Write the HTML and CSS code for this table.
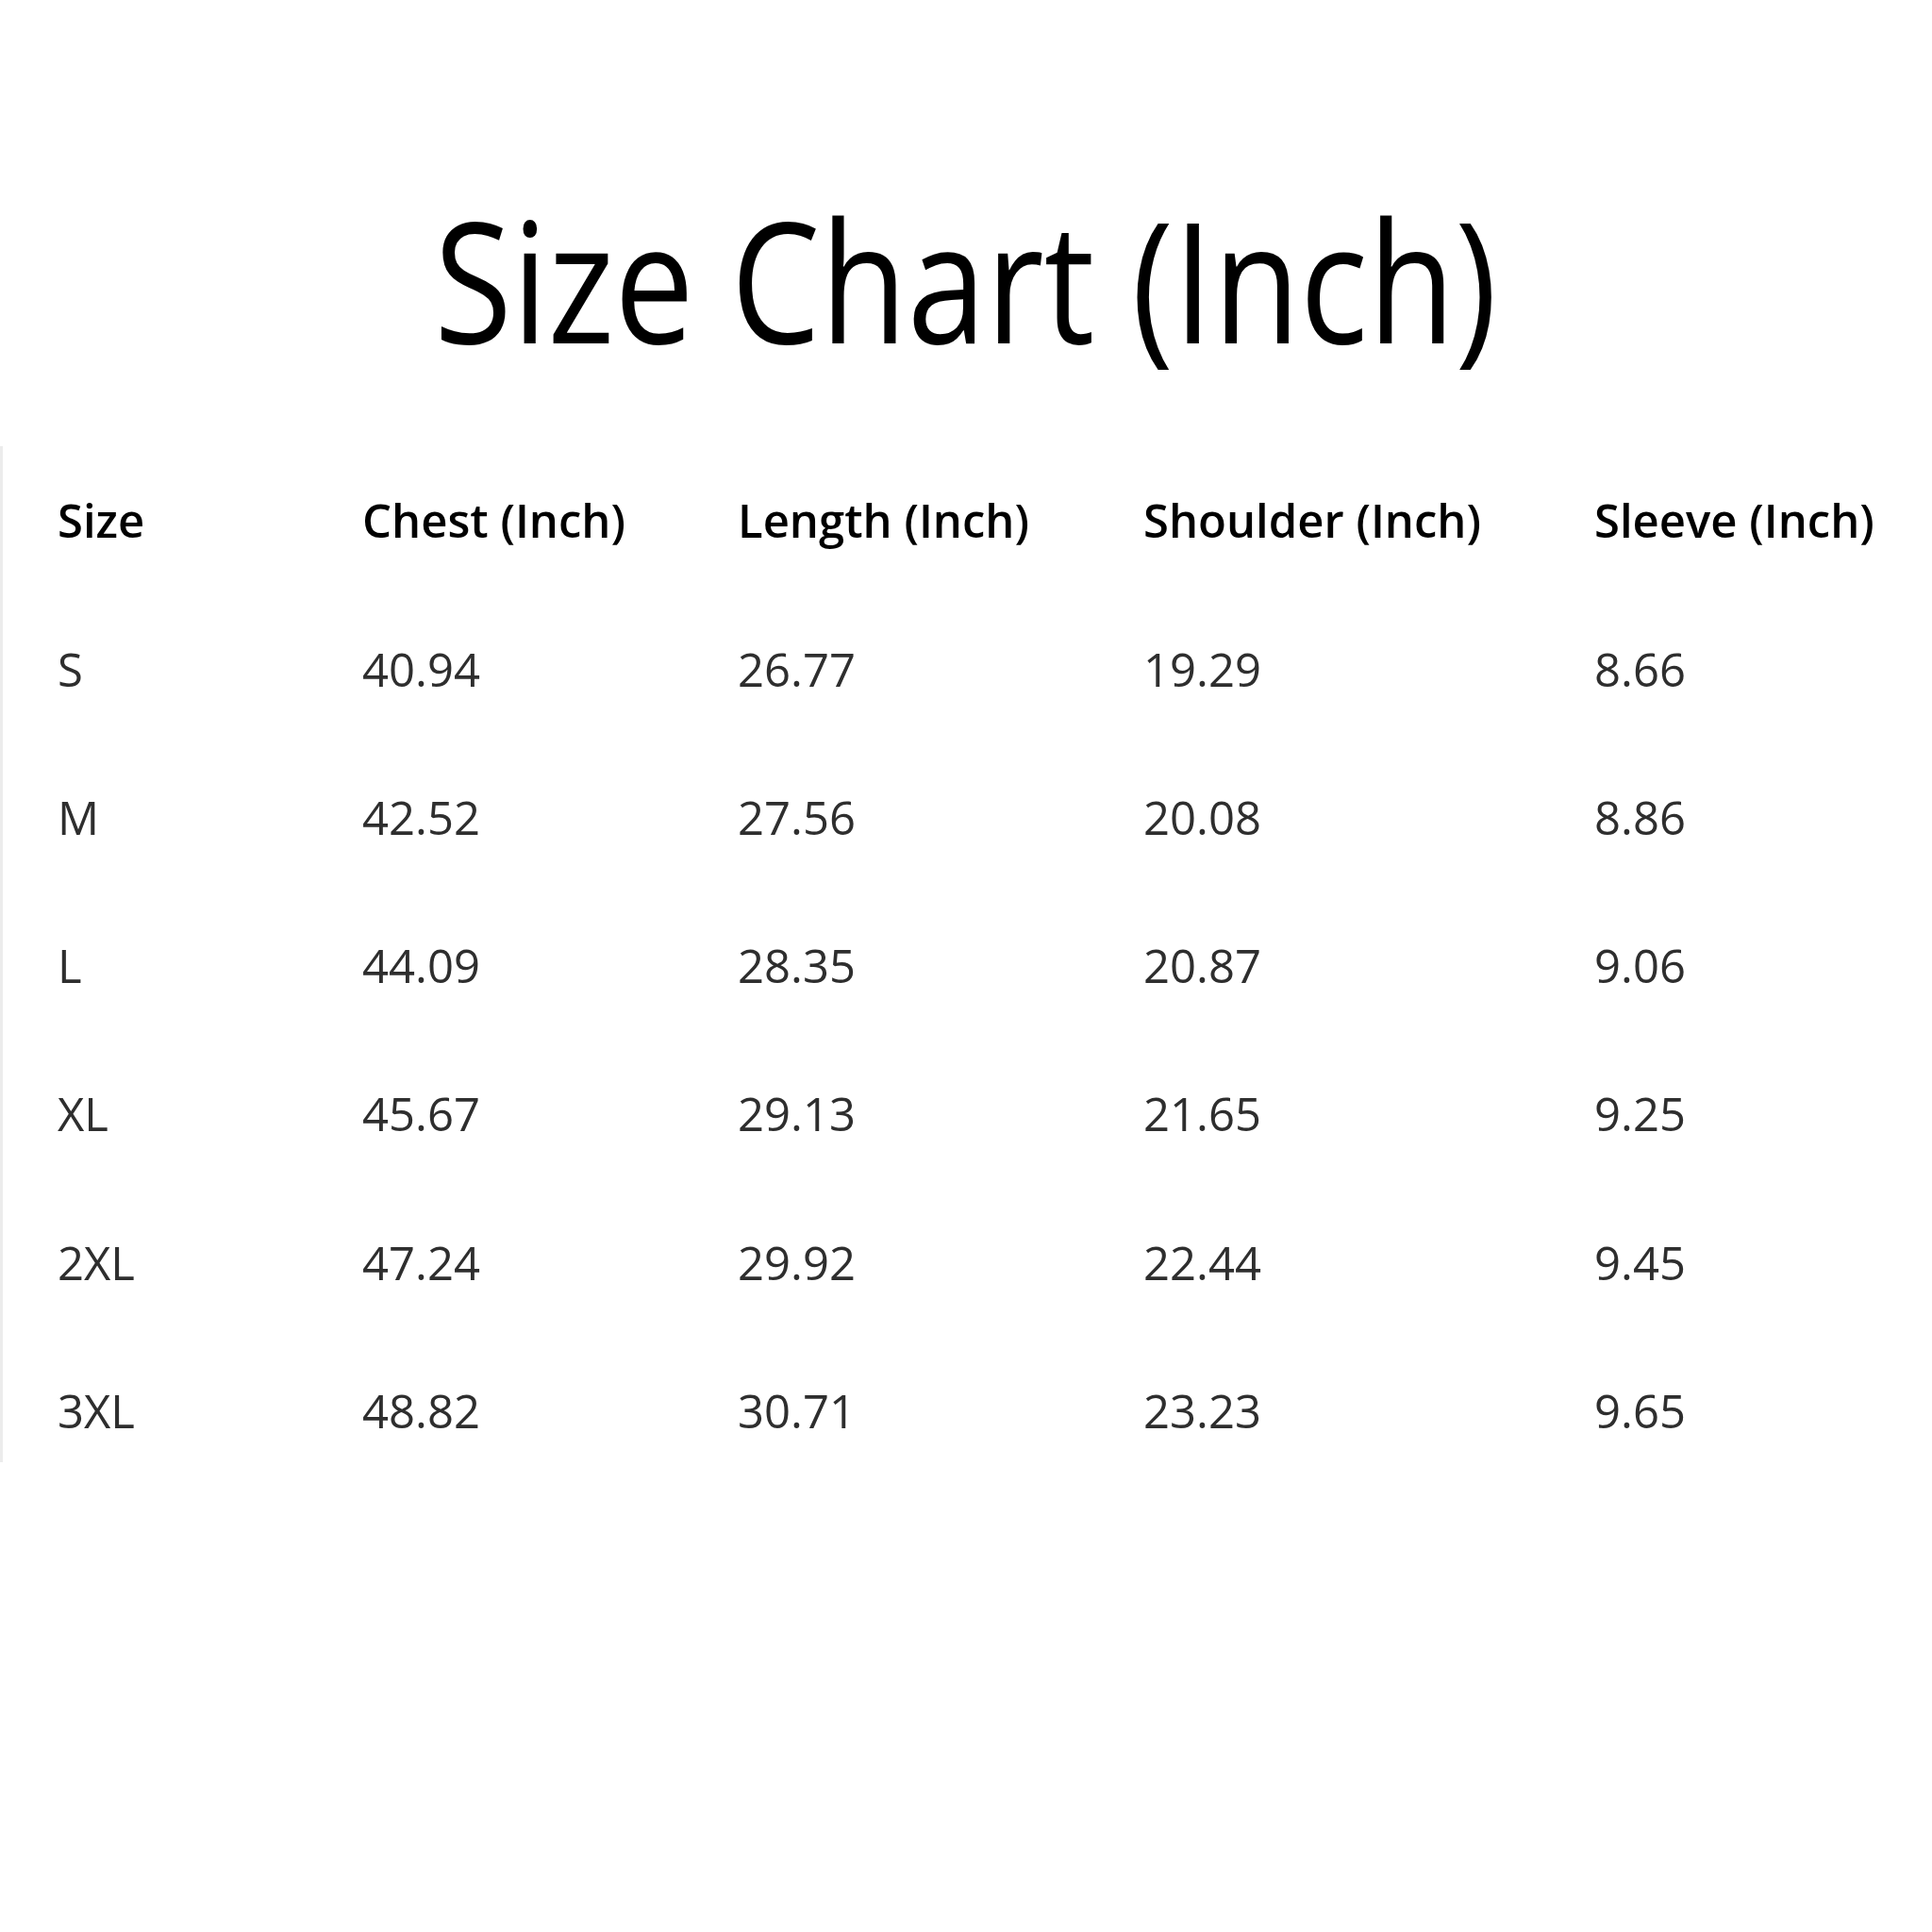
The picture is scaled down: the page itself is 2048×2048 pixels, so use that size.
FILE: index.html
```html
<!DOCTYPE html>
<html lang="en">
<head>
<meta charset="utf-8">
<title>Size Chart (Inch)</title>
<link rel="stylesheet" href="styles.css">
</head>
<body>
<main class="page">
  <h1 class="title"><span class="title-text">Size Chart (Inch)</span></h1>
  <div class="chart">
    <div class="row head">
      <div class="cell">Size</div>
      <div class="cell">Chest (Inch)</div>
      <div class="cell">Length (Inch)</div>
      <div class="cell">Shoulder (Inch)</div>
      <div class="cell">Sleeve (Inch)</div>
    </div>
    <div class="row">
      <div class="cell">S</div>
      <div class="cell">40.94</div>
      <div class="cell">26.77</div>
      <div class="cell">19.29</div>
      <div class="cell">8.66</div>
    </div>
    <div class="row">
      <div class="cell">M</div>
      <div class="cell">42.52</div>
      <div class="cell">27.56</div>
      <div class="cell">20.08</div>
      <div class="cell">8.86</div>
    </div>
    <div class="row">
      <div class="cell">L</div>
      <div class="cell">44.09</div>
      <div class="cell">28.35</div>
      <div class="cell">20.87</div>
      <div class="cell">9.06</div>
    </div>
    <div class="row">
      <div class="cell">XL</div>
      <div class="cell">45.67</div>
      <div class="cell">29.13</div>
      <div class="cell">21.65</div>
      <div class="cell">9.25</div>
    </div>
    <div class="row">
      <div class="cell">2XL</div>
      <div class="cell">47.24</div>
      <div class="cell">29.92</div>
      <div class="cell">22.44</div>
      <div class="cell">9.45</div>
    </div>
    <div class="row">
      <div class="cell">3XL</div>
      <div class="cell">48.82</div>
      <div class="cell">30.71</div>
      <div class="cell">23.23</div>
      <div class="cell">9.65</div>
    </div>
  </div>
</main>
</body>
</html>
```

FILE: styles.css
```css
html, body {
  margin: 0;
  padding: 0;
  background: #ffffff;
}

body {
  font-family: "Open Sans", "Noto Sans", "Liberation Sans", sans-serif;
  color: #000;
}

.page {
  width: 2048px;
  height: 2048px;
  padding-top: 206px;
  box-sizing: border-box;
}

.title {
  margin: 0;
  font-size: 178px;
  line-height: 178px;
  font-weight: 400;
  text-align: center;
  color: #000;
}

.title-text {
  display: inline-block;
  transform: scaleX(0.845);
  transform-origin: center;
  white-space: nowrap;
}

.chart {
  margin-top: 89px;
  height: 1077px;
  border-left: 3px solid #ececec;
  padding-left: 58px;
  box-sizing: border-box;
}

.row {
  display: grid;
  grid-template-columns: 323px 398px 430px 478px auto;
  height: 157.3px;
  align-items: center;
  font-size: 49px;
  line-height: 1.2;
  color: #2e2e2e;
}

.row.head {
  color: #000;
  font-weight: 600;
  margin-top: 5px;
}

.cell {
  white-space: nowrap;
}
```
